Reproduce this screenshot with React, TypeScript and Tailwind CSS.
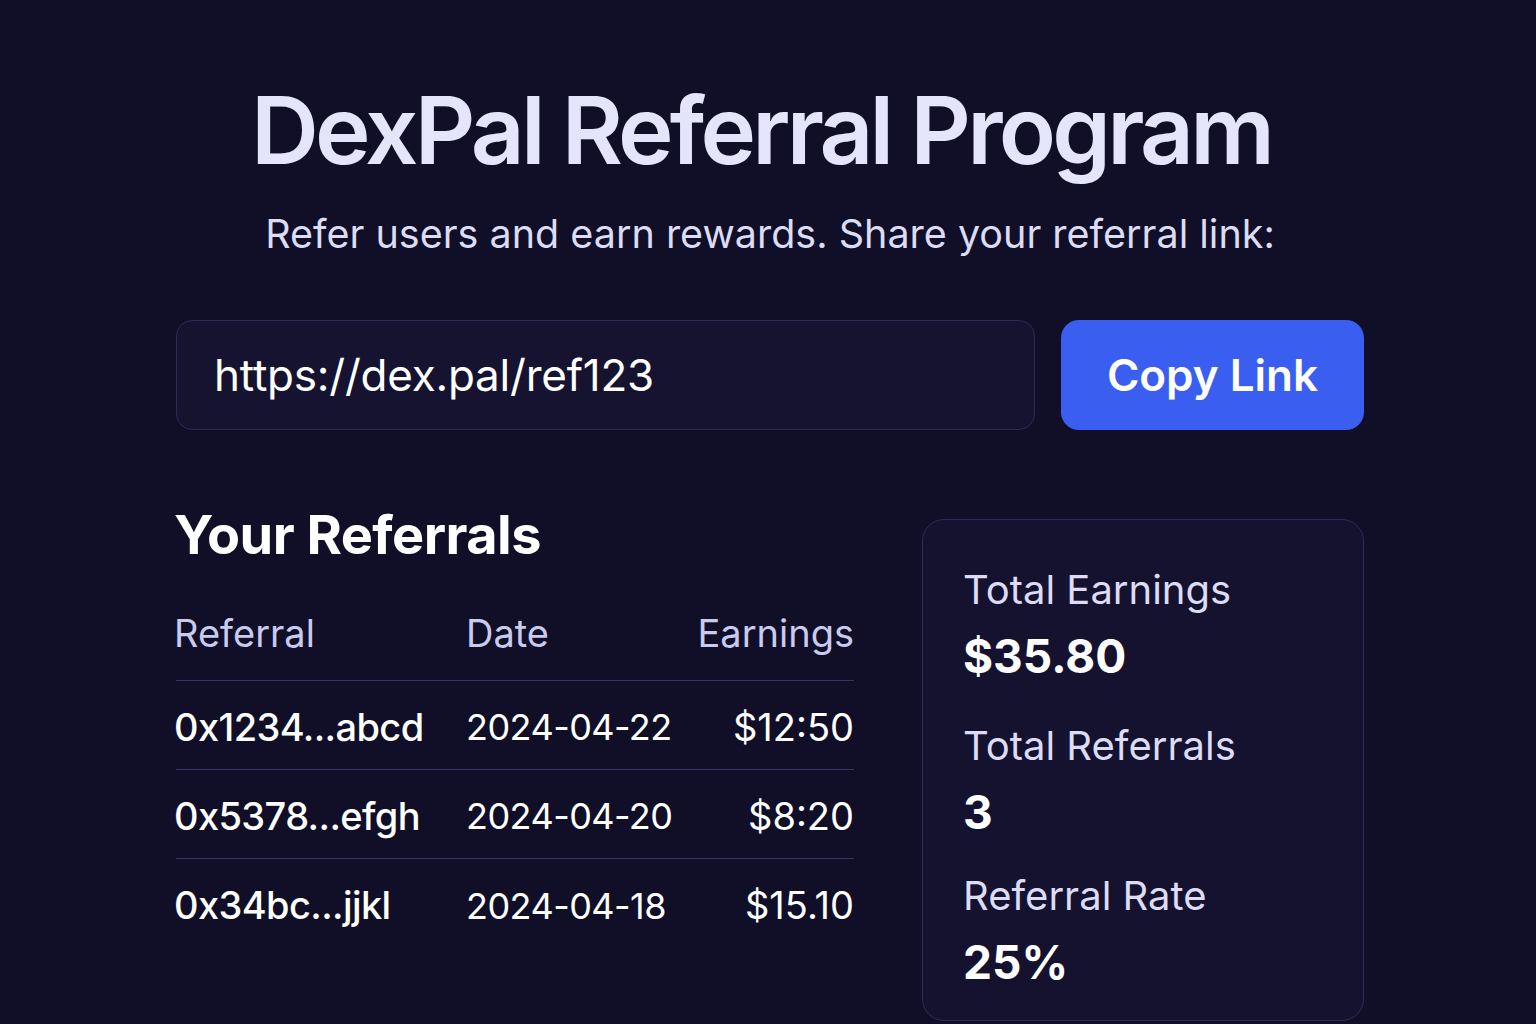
const referrals = [
  { id: '0x1234...abcd', date: '2024-04-22', earnings: '$12:50' },
  { id: '0x5378...efgh', date: '2024-04-20', earnings: '$8:20' },
  { id: '0x34bc...jjkl', date: '2024-04-18', earnings: '$15.10' },
]

const stats = [
  { label: 'Total Earnings', value: '$35.80', gap: '' },
  { label: 'Total Referrals', value: '3', gap: 'mt-[38px]' },
  { label: 'Referral Rate', value: '25%', gap: 'mt-[32px]' },
]

export default function App() {
  return (
    <div className="min-h-screen bg-[#100f27] font-['Inter',sans-serif] text-white">
      <div className="ml-[176px] w-[1188px] pt-[72px]">
        <h1 className="pr-[18px] text-center text-[94px] font-semibold leading-[116px] tracking-[-0.04em] text-[#e4e5fa]">
          DexPal Referral Program
        </h1>
        <p className="mt-[22px] text-center text-[39.5px] leading-[48px] text-[#dcdcf4]">
          Refer users and earn rewards. Share your referral link:
        </p>

        {/* link + copy */}
        <div className="mt-[62px] flex gap-[26px]">
          <div className="flex h-[110px] flex-1 items-center rounded-[16px] border border-[#2d2a58] bg-[#15132f] px-[37px] text-[44px] tracking-[-0.005em] text-white">
            https://dex.pal/ref123
          </div>
          <button className="h-[110px] w-[303px] rounded-[18px] bg-[#3a5ef0] text-[44px] font-semibold text-white">
            Copy Link
          </button>
        </div>

        <div className="mt-[89px] flex justify-between">
          <div className="w-[678px]">
            <h2 className="-ml-[2px] text-[54px] font-bold leading-[32px] tracking-[-0.01em] text-white">Your Referrals</h2>
            <div className="mt-[54px] grid grid-cols-[290px_1fr_auto] border-b border-[#35326a] pb-[18px] text-[38px] leading-[57px] text-[#c9cbee]">
              <span className="-ml-[2px]">Referral</span>
              <span>Date</span>
              <span className="text-right">Earnings</span>
            </div>
            {referrals.map((r, i) => (
              <div
                key={r.id}
                className={`grid h-[89px] grid-cols-[290px_1fr_auto] items-center pt-[4px] text-white ${
                  i < referrals.length - 1 ? 'border-b border-[#35326a]' : ''
                }`}
              >
                <span className="-ml-[2px] text-[38px] font-medium tracking-[-0.016em]">{r.id}</span>
                <span className="text-[36px] tracking-[-0.015em]">{r.date}</span>
                <span className="text-right text-[38px]">{r.earnings}</span>
              </div>
            ))}
          </div>

          <div className="h-[502px] w-[442px] rounded-[22px] border border-[#2e2b5c] bg-[#14122f] px-[40px] pt-[46px]">
            {stats.map((s) => (
              <div key={s.label} className={s.gap}>
                <div className="text-[40px] leading-[48px] text-[#dcdcf5]">{s.label}</div>
                <div className="mt-[14px] text-[46px] font-bold leading-[56px] text-white">{s.value}</div>
              </div>
            ))}
          </div>
        </div>
      </div>
    </div>
  )
}
